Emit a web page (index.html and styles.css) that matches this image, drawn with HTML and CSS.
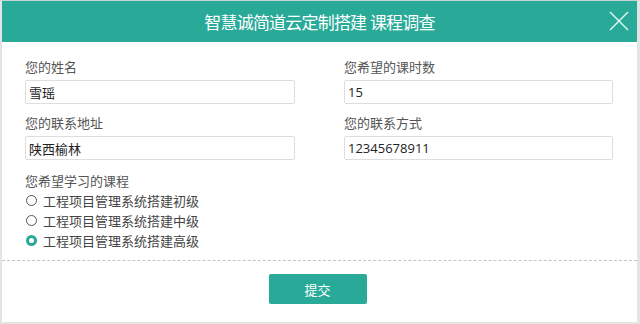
FILE: index.html
```html
<!DOCTYPE html>
<html lang="zh-CN">
  <head>
    <meta charset="UTF-8" />
    <meta name="viewport" content="width=device-width, initial-scale=1.0" />
    <title>课程调查</title>
    <link rel="stylesheet" href="styles.css">
  </head>
  <body>
    <div class="dialog">
      <div class="dialog-header">
        <h2>智慧诚简道云定制搭建 课程调查</h2>
        <span class="close">
          <svg width="20" height="20" viewBox="0 0 20 20">
            <path d="M1 1 L19 19 M19 1 L1 19" stroke="#e6f7f4" stroke-width="1.4" fill="none" />
          </svg>
        </span>
      </div>

      <form class="dialog-body" novalidate>
        <div class="grid">
          <div class="field">
            <label for="name">您的姓名</label>
            <input type="text" id="name" value="雪瑶" />
          </div>
          <div class="field">
            <label for="hours">您希望的课时数</label>
            <input type="text" id="hours" value="15" />
          </div>
          <div class="field">
            <label for="address">您的联系地址</label>
            <input type="text" id="address" value="陕西榆林" />
          </div>
          <div class="field">
            <label for="phone">您的联系方式</label>
            <input type="text" id="phone" value="12345678911" />
          </div>
        </div>

        <div class="course">
          <p class="course-title">您希望学习的课程</p>
          <label class="radio"><span class="dot"></span>工程项目管理系统搭建初级</label>
          <label class="radio"><span class="dot"></span>工程项目管理系统搭建中级</label>
          <label class="radio"><span class="dot checked"></span>工程项目管理系统搭建高级</label>
        </div>
      </form>

      <div class="dialog-footer">
        <button type="submit">提交</button>
      </div>
    </div>
  </body>
</html>
```

FILE: styles.css
```css
body {
  margin: 0;
  background-color: #fff;
  font-family: "Open Sans", "Noto Sans CJK SC", sans-serif;
}

.dialog {
  box-sizing: border-box;
  width: 640px;
  height: 324px;
  border: 2px solid #e4e4e4;
  border-top: 1px solid #c9d3d1;
  border-left-width: 2px;
  border-right-width: 3px;
  display: flex;
  flex-direction: column;
}

.dialog-header {
  position: relative;
  height: 41px;
  background-color: #29aa98;
  display: flex;
  align-items: center;
  justify-content: center;
}

.dialog-header h2 {
  margin: 0 0 1px 0;
  color: #fff;
  font-size: 17px;
  font-weight: normal;
  letter-spacing: -0.8px;
}

.close {
  position: absolute;
  right: 8px;
  top: 10px;
  width: 20px;
  height: 20px;
}

.dialog-body {
  padding: 15px 21px 10px 23px;
  border-bottom: 1px dashed #c4c4c4;
}

.grid {
  display: grid;
  grid-template-columns: 270px 269px;
  column-gap: 49px;
  row-gap: 9px;
}

.field label {
  display: block;
  height: 20px;
  line-height: 20px;
  margin-bottom: 3px;
  font-size: 13px;
  color: #555;
}

.field input {
  box-sizing: border-box;
  width: 100%;
  height: 24px;
  padding: 0 3px;
  border: 1px solid #dedede;
  border-radius: 2px;
  font-family: "Open Sans", "Noto Sans CJK SC", sans-serif;
  font-size: 13px;
  color: #222;
  outline: none;
}

.course {
  margin-top: 11px;
}

.course-title {
  margin: 0;
  height: 20px;
  line-height: 20px;
  font-size: 13px;
  color: #555;
}

.radio {
  display: flex;
  align-items: center;
  height: 19.7px;
  font-size: 13px;
  color: #444;
}

.dot {
  box-sizing: border-box;
  width: 11px;
  height: 11px;
  margin: 0 6px 0 1px;
  border: 1.3px solid #555;
  border-radius: 50%;
}

.dot.checked {
  border: 3px solid #29aa98;
  background-color: #fff;
}

.dialog-footer {
  display: flex;
  justify-content: center;
  padding-top: 13px;
}

button {
  width: 98px;
  height: 30px;
  margin-left: -4px;
  border: none;
  border-radius: 2px;
  background-color: #29aa98;
  color: #fff;
  font-family: "Noto Sans CJK SC", sans-serif;
  font-size: 13px;
  cursor: pointer;
}
```
